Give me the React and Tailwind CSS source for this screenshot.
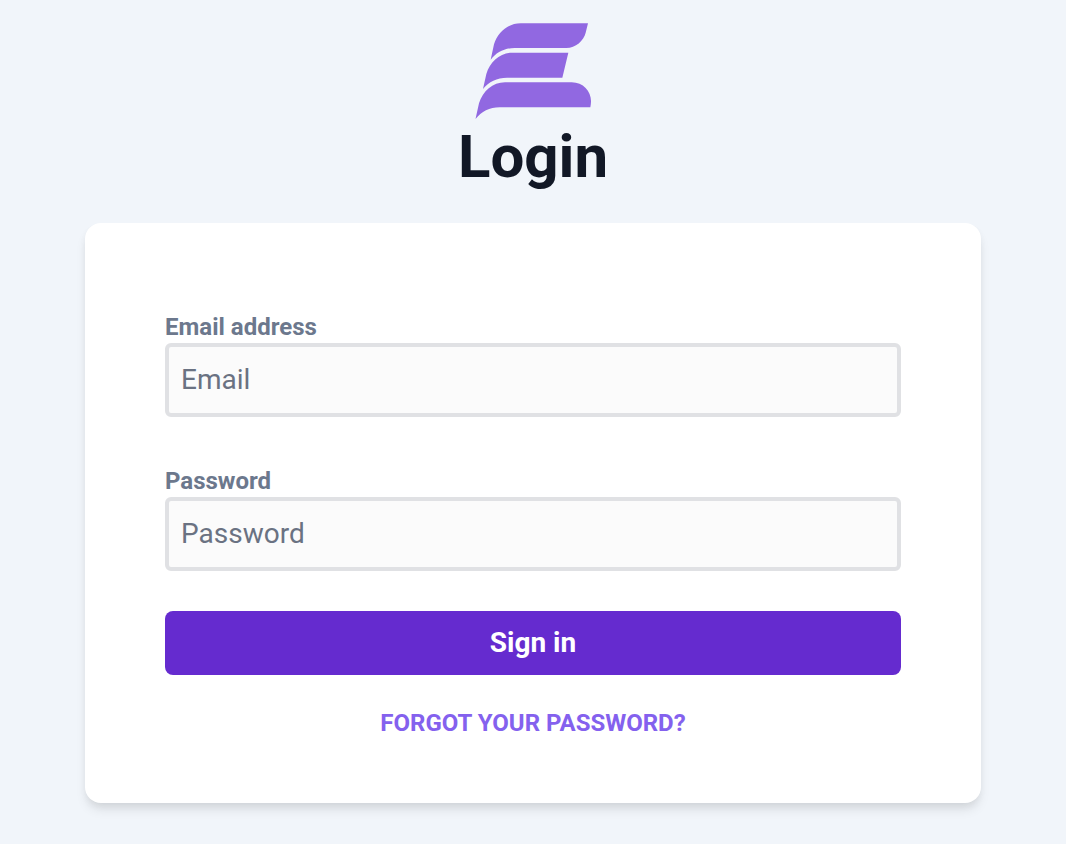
function Logo() {
  return (
    <svg viewBox="48 39 351 288" className="h-24 w-auto" fill="#9168e1" role="img" aria-label="Company logo">
      <path d="M185 39.500H387L380 68C374 92 350 114 322 114H167C137 114 112 127 95 149L105 103C116 66 148 39.500 185 39.500Z" />
      <path d="M160 128H328L310 203H144C114 203 89 215 72 237L82 192C93 155 123 128 160 128Z" />
      <path d="M138 216.500H338C373 216.500 397 244 396 275C396 281 395 286 394 291.500H122C92 291.500 67 304 49.500 327L60 280C71 243 101 216.500 138 216.500Z" />
    </svg>
  );
}

function Field({ id, label, type, placeholder, autoComplete }) {
  return (
    <div className="flex flex-col">
      <label htmlFor={id} className="text-2xl leading-8 font-bold text-[#6c788d]">
        {label}
      </label>
      <input
        id={id}
        name={id}
        type={type}
        placeholder={placeholder}
        autoComplete={autoComplete}
        className="w-full rounded-md border-4 border-[#e0e1e4] bg-[#fbfbfb] px-3 py-3 text-[28px] leading-[42px] text-gray-900 outline-none placeholder:text-gray-500 focus:border-violet-500"
      />
    </div>
  );
}

export default function App() {
  return (
    <main className="flex min-h-screen flex-col items-center bg-[#f1f5fa] px-10 pt-[23px] pb-10 font-['Roboto',sans-serif]">
      <header className="flex flex-col items-center gap-2">
        <Logo />
        <h1 className="text-6xl leading-[60px] font-bold text-[#121826]">Login</h1>
      </header>
      <form
        className="mt-9 flex w-full max-w-4xl flex-col rounded-2xl bg-white px-20 pt-22 pb-16 shadow-[0_8px_12px_-2px_rgba(0,0,0,0.1),0_4px_8px_-2px_rgba(0,0,0,0.06)]"
        onSubmit={(event) => event.preventDefault()}
      >
        <div className="flex flex-col gap-12">
          <Field id="email" label="Email address" type="email" placeholder="Email" autoComplete="email" />
          <Field id="password" label="Password" type="password" placeholder="Password" autoComplete="current-password" />
        </div>
        <button
          type="submit"
          className="mt-10 h-16 rounded-lg bg-[#652bcf] text-[28px] leading-10 font-bold text-white hover:bg-violet-800"
        >
          Sign in
        </button>
        <a href="#forgot-password" className="mt-8 self-center text-2xl leading-8 font-bold text-[#8461ee] uppercase">
          Forgot your password?
        </a>
      </form>
    </main>
  );
}
